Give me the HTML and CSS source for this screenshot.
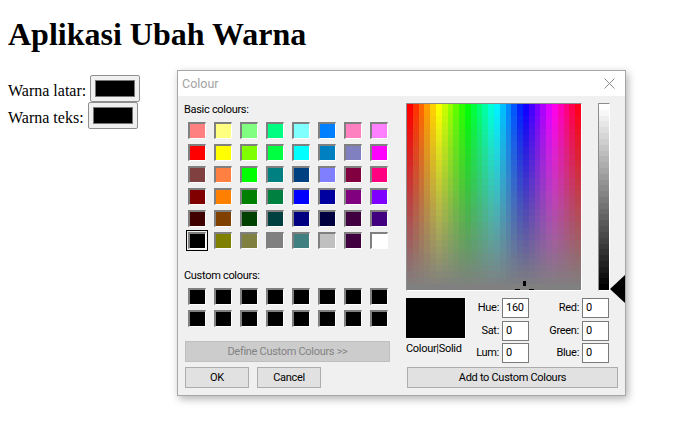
FILE: index.html
```html
<!DOCTYPE html>
<html lang="id">
<head>
<meta charset="utf-8">
<title>Aplikasi Ubah Warna</title>
<link rel="stylesheet" href="styles.css">
</head>
<body>
<h1 class="title">Aplikasi Ubah Warna</h1>
<div class="pick-row"><span class="pick-text">Warna latar: </span><button class="pick"><span class="pick-fill"></span></button></div>
<div class="pick-row"><span class="pick-text">Warna teks: </span><button class="pick"><span class="pick-fill"></span></button></div>

<section class="dialog">
  <header class="dialog-title">
    <span>Colour</span>
    <svg class="close" width="11" height="11" viewBox="0 0 11 11"><path d="M.5.5l10 10M10.5.5l-10 10" stroke="#8a8a8a" fill="none"/></svg>
  </header>
  <div class="dialog-body">
    <div class="col-left">
      <div class="label">Basic colours:</div>
      <div class="swatches">
        <i class="sw" style="background:#ff8080"></i><i class="sw" style="background:#ffff80"></i><i class="sw" style="background:#80ff80"></i><i class="sw" style="background:#00ff80"></i><i class="sw" style="background:#80ffff"></i><i class="sw" style="background:#0080ff"></i><i class="sw" style="background:#ff80c0"></i><i class="sw" style="background:#ff80ff"></i>
        <i class="sw" style="background:#ff0000"></i><i class="sw" style="background:#ffff00"></i><i class="sw" style="background:#80ff00"></i><i class="sw" style="background:#00ff40"></i><i class="sw" style="background:#00ffff"></i><i class="sw" style="background:#0080c0"></i><i class="sw" style="background:#8080c0"></i><i class="sw" style="background:#ff00ff"></i>
        <i class="sw" style="background:#804040"></i><i class="sw" style="background:#ff8040"></i><i class="sw" style="background:#00ff00"></i><i class="sw" style="background:#008080"></i><i class="sw" style="background:#004080"></i><i class="sw" style="background:#8080ff"></i><i class="sw" style="background:#800040"></i><i class="sw" style="background:#ff0080"></i>
        <i class="sw" style="background:#800000"></i><i class="sw" style="background:#ff8000"></i><i class="sw" style="background:#008000"></i><i class="sw" style="background:#008040"></i><i class="sw" style="background:#0000ff"></i><i class="sw" style="background:#0000a0"></i><i class="sw" style="background:#800080"></i><i class="sw" style="background:#8000ff"></i>
        <i class="sw" style="background:#400000"></i><i class="sw" style="background:#804000"></i><i class="sw" style="background:#004000"></i><i class="sw" style="background:#004040"></i><i class="sw" style="background:#000080"></i><i class="sw" style="background:#000040"></i><i class="sw" style="background:#400040"></i><i class="sw" style="background:#400080"></i>
        <i class="sw sw-selected" style="background:#000000"></i><i class="sw" style="background:#808000"></i><i class="sw" style="background:#808040"></i><i class="sw" style="background:#808080"></i><i class="sw" style="background:#408080"></i><i class="sw" style="background:#c0c0c0"></i><i class="sw" style="background:#400040"></i><i class="sw" style="background:#ffffff"></i>
      </div>
      <div class="label label-custom">Custom colours:</div>
      <div class="swatches">
        <i class="sw sw-black"></i><i class="sw sw-black"></i><i class="sw sw-black"></i><i class="sw sw-black"></i><i class="sw sw-black"></i><i class="sw sw-black"></i><i class="sw sw-black"></i><i class="sw sw-black"></i>
        <i class="sw sw-black"></i><i class="sw sw-black"></i><i class="sw sw-black"></i><i class="sw sw-black"></i><i class="sw sw-black"></i><i class="sw sw-black"></i><i class="sw sw-black"></i><i class="sw sw-black"></i>
      </div>
      <button class="btn btn-define" disabled>Define Custom Colours &gt;&gt;</button>
      <div class="btn-row">
        <button class="btn btn-small">OK</button>
        <button class="btn btn-small">Cancel</button>
      </div>
    </div>
    <div class="col-right">
      <div class="picker">
        <div class="spectrum">
          <canvas id="spectrum" class="fill" width="30" height="30"></canvas>
          <div class="cross cross-top"></div>
          <div class="cross cross-left"></div>
          <div class="cross cross-right"></div>
        </div>
        <div class="lum">
          <canvas id="lum" class="fill" width="1" height="32"></canvas>
        </div>
        <div class="arrow"></div>
      </div>
      <div class="values">
        <div class="preview-col">
          <div class="preview"></div>
          <div class="preview-label">Colour|Solid</div>
        </div>
        <div class="fields">
          <label class="f-label">Hue:</label><div class="f-input">160</div>
          <label class="f-label">Red:</label><div class="f-input">0</div>
          <label class="f-label">Sat:</label><div class="f-input">0</div>
          <label class="f-label">Green:</label><div class="f-input">0</div>
          <label class="f-label">Lum:</label><div class="f-input">0</div>
          <label class="f-label">Blue:</label><div class="f-input">0</div>
        </div>
      </div>
      <button class="btn btn-add">Add to Custom Colours</button>
    </div>
  </div>
</section>
<script src="script.js"></script>
</body>
</html>
```

FILE: styles.css
```css
html, body { margin: 0; padding: 0; background: #fff; }
body {
  padding: 0 8px;
  font-family: "Liberation Serif", serif;
  font-size: 16px;
  color: #000;
  height: 423px;
  box-sizing: border-box;
  overflow: hidden;
  position: relative;
}
.title {
  margin: 0;
  padding-top: 16px;
  height: 59px;
  box-sizing: border-box;
  font-size: 32px;
  font-weight: bold;
  line-height: 37px;
}
.pick-row { height: 27px; display: flex; align-items: flex-start; white-space: pre; }
.pick-row:first-of-type { margin-top: 16px; }
.pick-text { padding-top: 7px; }
.pick {
  width: 50px;
  height: 27px;
  padding: 0;
  box-sizing: border-box;
  border: 1px solid #8f8f8f;
  border-radius: 2px;
  background: #f0f0f0;
  display: flex;
  align-items: center;
  justify-content: center;
}
.pick-fill {
  display: block;
  width: 40px;
  height: 17px;
  box-sizing: border-box;
  background: #000;
  border: 1px solid #767676;
}

.dialog {
  position: absolute;
  left: 177px;
  top: 70px;
  width: 449px;
  height: 326px;
  box-sizing: border-box;
  border: 1px solid #a6a6a6;
  background: #f0f0f0;
  box-shadow: 2px 3px 8px rgba(0,0,0,.3);
  font-family: Roboto, sans-serif;
  font-size: 11px;
  letter-spacing: -0.3px;
  color: #000;
  overflow: hidden;
}
.dialog-title {
  height: 25px;
  background: #fff;
  color: #a3a3a3;
  font-size: 12.5px;
  letter-spacing: 0;
  display: flex;
  align-items: center;
  justify-content: space-between;
  padding: 0 10px 0 4px;
}
.dialog-body { display: flex; padding: 7px 0 0 7px; gap: 16px; }
.col-left { width: 205px; }
.label { height: 19px; line-height: 14px; margin-left: -1px; }
.label-custom { margin-top: 20px; }
.swatches {
  display: grid;
  grid-template-columns: repeat(8, 18px);
  grid-auto-rows: 17px;
  column-gap: 8px;
  row-gap: 5px;
  margin-left: 3px;
}
.sw {
  display: block;
  box-sizing: border-box;
  border-style: solid;
  border-width: 2px 1px 1px 2px;
  border-color: #808080 #fff #fff #808080;
}
.sw-black { background: #000; }
.sw-selected { outline: 1px solid #000; outline-offset: 1px; }
.btn {
  display: block;
  box-sizing: border-box;
  height: 21px;
  padding: 0;
  border: 1px solid #adadad;
  background: #e1e1e1;
  font: inherit;
  letter-spacing: inherit;
  color: #000;
  text-align: center;
}
.btn-define {
  width: 205px;
  margin-top: 14px;
  background: #cccccc;
  border-color: #bfbfbf;
  color: #838383;
}
.btn-row { display: flex; gap: 8px; margin-top: 5px; }
.btn-small { width: 64px; }
.picker { display: flex; gap: 16px; position: relative; height: 188px; }
.fill { display: block; width: 100%; height: 100%; image-rendering: pixelated; }
.spectrum {
  position: relative;
  width: 176px;
  height: 188px;
  box-sizing: border-box;
  border-style: solid;
  border-width: 1px;
  border-color: #8c8c8c #fff #fff #8c8c8c;
  overflow: hidden;
}
.cross { position: absolute; background: #000; }
.cross-top { left: 116px; top: 177px; width: 3px; height: 5px; }
.cross-left { left: 108px; top: 185px; width: 5px; height: 2px; }
.cross-right { left: 122px; top: 185px; width: 5px; height: 2px; }
.lum {
  width: 12px;
  height: 188px;
  box-sizing: border-box;
  border-style: solid;
  border-width: 1px;
  border-color: #8c8c8c #fff #fff #8c8c8c;
}
.arrow {
  position: absolute;
  left: 204px;
  top: 172px;
  width: 0;
  height: 0;
  border-style: solid;
  border-width: 14px 15px 14px 0;
  border-color: transparent #000 transparent transparent;
}
.values { display: flex; margin-top: 7px; }
.preview-col { width: 60px; }
.preview {
  height: 41px;
  background: #000;
  border-right: 1px solid #fff;
  border-bottom: 1px solid #fff;
  box-sizing: border-box;
}
.preview-label { margin-top: 3px; line-height: 14px; white-space: nowrap; }
.fields {
  display: grid;
  grid-template-columns: 36px 27px 53px 27px;
  grid-template-rows: 20px 20px 20px;
  row-gap: 2.5px;
}
.f-label { text-align: right; padding-right: 3px; line-height: 20px; }
.f-input {
  box-sizing: border-box;
  background: #fff;
  border: 1px solid #7a7a7a;
  padding-left: 3px;
  line-height: 17px;
}
.btn-add { width: 211px; margin: 4px 0 0 1px; }
```

FILE: script.js
```js
function hsl(h, s, l) {
  var c = (1 - Math.abs(2 * l - 1)) * s, x = c * (1 - Math.abs((h / 60) % 2 - 1)), m = l - c / 2;
  var r = 0, g = 0, b = 0;
  if (h < 60) { r = c; g = x; }
  else if (h < 120) { r = x; g = c; }
  else if (h < 180) { g = c; b = x; }
  else if (h < 240) { g = x; b = c; }
  else if (h < 300) { r = x; b = c; }
  else { r = c; b = x; }
  return "rgb(" + Math.round((r + m) * 255) + "," + Math.round((g + m) * 255) + "," + Math.round((b + m) * 255) + ")";
}
var sp = document.getElementById("spectrum").getContext("2d");
for (var i = 0; i < 30; i++) {
  for (var j = 0; j < 30; j++) {
    sp.fillStyle = hsl(i * 12.2, 1 - j / 29, 0.5);
    sp.fillRect(i, j, 1, 1);
  }
}
var lm = document.getElementById("lum").getContext("2d");
for (var k = 0; k < 32; k++) {
  var v = Math.round(255 * (1 - k / 31));
  lm.fillStyle = "rgb(" + v + "," + v + "," + v + ")";
  lm.fillRect(0, k, 1, 1);
}
```
